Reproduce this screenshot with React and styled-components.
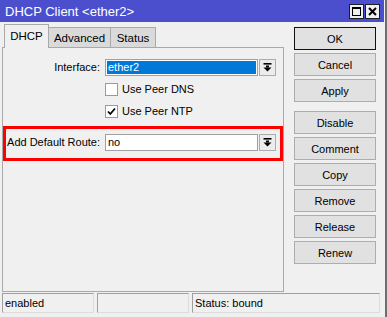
import React from 'react';
import styled, { createGlobalStyle } from 'styled-components';

const GlobalStyle = createGlobalStyle`
  html, body { margin: 0; padding: 0; background: #f0f0f0; }
  body {
    font-family: "Liberation Sans", Arial, sans-serif;
    font-size: 11px;
    color: #000;
  }
`;

const Window = styled.div`
  width: 387px;
  height: 317px;
  box-sizing: border-box;
  display: flex;
  flex-direction: column;
  background: #f0f0f0;
  border-right: 2px solid #6e6e6e;
`;

const TitleBar = styled.div`
  height: 22px;
  flex: none;
  display: flex;
  align-items: center;
  justify-content: space-between;
  padding: 0 4px 0 5px;
  margin-right: 1px;
  background: #4c4fcd;
  color: #fff;
  font-size: 13px;
`;

const TitleButtons = styled.div`
  display: flex;
  gap: 1px;
`;

const TitleButton = styled.div`
  width: 15px;
  height: 15px;
  box-sizing: border-box;
  border: 1px solid #1e1e1e;
  background: #f0f0f0;
  display: flex;
  align-items: center;
  justify-content: center;
`;

const Body = styled.div`
  flex: 1;
  display: flex;
  gap: 10px;
  padding: 2px 0 0 2px;
  min-height: 0;
`;

const Main = styled.div`
  width: 282px;
  display: flex;
  flex-direction: column;
`;

const TabStrip = styled.div`
  height: 23px;
  display: flex;
  align-items: flex-end;
  padding-left: 2px;
`;

const Tab = styled.div`
  position: relative;
  box-sizing: border-box;
  display: flex;
  align-items: center;
  justify-content: center;
  border: 1px solid #a9a9a9;
  border-bottom: none;
  width: ${p => p.$w}px;
  height: ${p => (p.$active ? 24 : 20)}px;
  margin-bottom: ${p => (p.$active ? -1 : 0)}px;
  background: ${p => (p.$active ? '#f0f0f0' : '#dadada')};
  border-left: ${p => (p.$first ? '1px solid #a9a9a9' : 'none')};
  z-index: ${p => (p.$active ? 1 : 0)};
  padding-bottom: ${p => (p.$active ? 2 : 0)}px;
  font-size: 11.5px;
`;

const Panel = styled.div`
  flex: 1;
  border: 1px solid #a9a9a9;
  padding-top: 8px;
`;

const Row = styled.div`
  display: flex;
  align-items: center;
  box-sizing: border-box;
  height: ${p => (p.$highlight ? 35 : 22)}px;
  padding: ${p => (p.$highlight ? '0 0 3px 0' : '0 3px')};
  margin-top: ${p => (p.$highlight ? 4 : 0)}px;
  border: ${p => (p.$highlight ? '3px solid #ff0000' : 'none')};
`;

const Label = styled.div`
  width: 94px;
  margin-right: 5px;
  text-align: right;
  white-space: nowrap;
`;

const Field = styled.div`
  width: 153px;
  height: 17px;
  box-sizing: border-box;
  border: 1px solid #a0a0a0;
  background: #fff;
  padding: 1px;
  display: flex;
`;

const FieldText = styled.div`
  flex: 1;
  display: flex;
  align-items: center;
  padding-left: 1px;
  background: ${p => (p.$selected ? '#0078d7' : '#fff')};
  color: ${p => (p.$selected ? '#fff' : '#000')};
`;

const DropButton = styled.div`
  width: 17px;
  height: 17px;
  box-sizing: border-box;
  margin-left: 1px;
  border: 1px solid #acacac;
  background: #ececec;
  display: flex;
  align-items: center;
  justify-content: center;
`;

const Check = styled.div`
  width: 13px;
  height: 13px;
  box-sizing: border-box;
  border: 1px solid #9a9a9a;
  background: #fff;
  margin-right: 4px;
  display: flex;
  align-items: center;
  justify-content: center;
`;

const Side = styled.div`
  width: 82px;
  padding-top: 3px;
  display: flex;
  flex-direction: column;
  gap: 3px;
`;

const Button = styled.div`
  height: 23px;
  box-sizing: border-box;
  border: 1px solid ${p => (p.$default ? '#111' : '#adadad')};
  background: #e1e1e1;
  display: flex;
  align-items: center;
  justify-content: center;
  margin-top: ${p => (p.$spaced ? 6 : 0)}px;
`;

const StatusBar = styled.div`
  height: 20px;
  flex: none;
  margin: 1px 0 4px 2px;
  display: flex;
  gap: 3px;
`;

const StatusCell = styled.div`
  width: ${p => p.$w}px;
  box-sizing: border-box;
  border: 1px solid #a0a0a0;
  border-right-color: #dcdcdc;
  border-bottom-color: #dcdcdc;
  display: flex;
  align-items: center;
  padding-left: 2px;
`;

const DropIcon = () => (
  <svg width="9" height="9" viewBox="0 0 9 9">
    <rect x="0.5" y="0" width="8" height="1.6" fill="#000" />
    <rect x="3" y="2.5" width="3" height="2" fill="#000" />
    <polygon points="0.5,4.5 8.5,4.5 4.5,8.6" fill="#000" />
  </svg>
);

const CheckMark = () => (
  <svg width="9" height="9" viewBox="0 0 9 9">
    <polyline points="1,4.5 3.3,7 8,1.5" fill="none" stroke="#000" strokeWidth="1.8" />
  </svg>
);

export default function App() {
  return (
    <>
      <GlobalStyle />
      <Window>
        <TitleBar>
          <span>DHCP Client &lt;ether2&gt;</span>
          <TitleButtons>
            <TitleButton>
              <svg width="9" height="9" viewBox="0 0 9 9">
                <rect x="0.5" y="0.5" width="8" height="8" fill="none" stroke="#000" />
                <rect x="0.5" y="0.5" width="8" height="1.5" fill="#000" />
              </svg>
            </TitleButton>
            <TitleButton>
              <svg width="9" height="9" viewBox="0 0 9 9">
                <path d="M1 1 L8 8 M8 1 L1 8" stroke="#000" strokeWidth="2" />
              </svg>
            </TitleButton>
          </TitleButtons>
        </TitleBar>
        <Body>
          <Main>
            <TabStrip>
              <Tab $active $first $w={45}>DHCP</Tab>
              <Tab $w={62}>Advanced</Tab>
              <Tab $w={45}>Status</Tab>
            </TabStrip>
            <Panel>
              <Row>
                <Label>Interface:</Label>
                <Field><FieldText $selected>ether2</FieldText></Field>
                <DropButton><DropIcon /></DropButton>
              </Row>
              <Row>
                <Label />
                <Check />
                Use Peer DNS
              </Row>
              <Row>
                <Label />
                <Check><CheckMark /></Check>
                Use Peer NTP
              </Row>
              <Row $highlight>
                <Label>Add Default Route:</Label>
                <Field><FieldText>no</FieldText></Field>
                <DropButton><DropIcon /></DropButton>
              </Row>
            </Panel>
          </Main>
          <Side>
            <Button $default>OK</Button>
            <Button>Cancel</Button>
            <Button>Apply</Button>
            <Button $spaced>Disable</Button>
            <Button>Comment</Button>
            <Button>Copy</Button>
            <Button>Remove</Button>
            <Button>Release</Button>
            <Button>Renew</Button>
          </Side>
        </Body>
        <StatusBar>
          <StatusCell $w={92}>enabled</StatusCell>
          <StatusCell $w={92} />
          <StatusCell $w={188}>Status: bound</StatusCell>
        </StatusBar>
      </Window>
    </>
  );
}
